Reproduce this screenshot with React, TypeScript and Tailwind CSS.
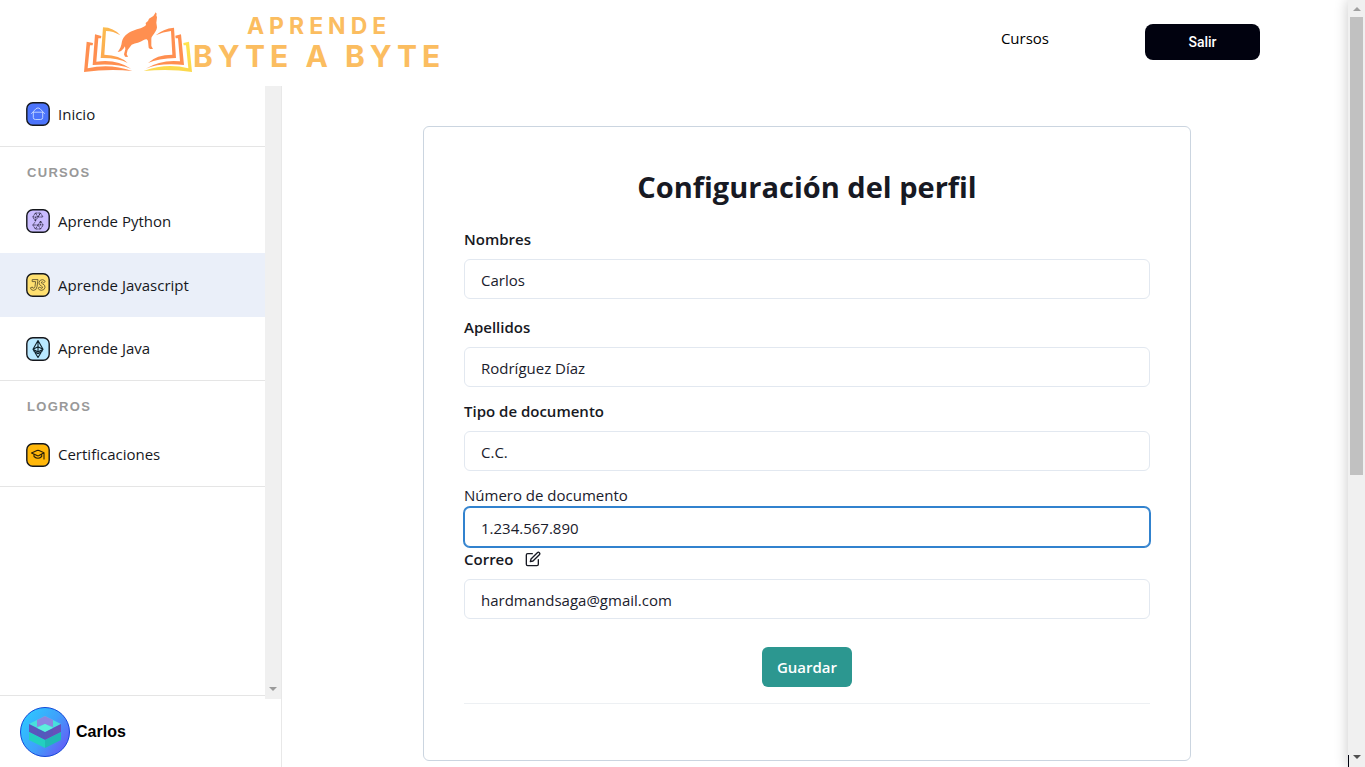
import type { ReactNode } from "react";
import { FiEdit } from "react-icons/fi";

function BookLogo() {
  return (
    <svg viewBox="40 36 330 183" className="h-[61px] w-[110px] shrink-0" aria-hidden="true">
      <defs>
        <linearGradient id="warm" x1="0" y1="0" x2="1" y2="1">
          <stop offset="0" stopColor="#fbc04f" />
          <stop offset="1" stopColor="#ff8f4d" />
        </linearGradient>
        <linearGradient id="sun" x1="0" y1="0" x2="0" y2="1">
          <stop offset="0" stopColor="#ffe54f" />
          <stop offset="1" stopColor="#fbd84d" />
        </linearGradient>
      </defs>
      <g fill="#ff8f50">
        <path d="M51 125 L70 129 L69 136 L61 136 L54 205 Q120 189 188 213 Q120 205 43 216 Z" />
        <path d="M76 103 L95 108 L94 115 L86 115 L80 185 Q140 176 184 206 Q140 189 69 195 Z" />
        <path d="M258 106 Q280 86 313 83 L319 174 Q265 176 235 189 Q260 164 308 164 L304 93 Q280 95 258 106 Z" />
        <path d="M317 107 L334 103 L343 195 Q270 188 228 206 Q275 178 331 184 L325 115 L318 115 Z" />
        <path d="M258 37 L255 42 L251 48 L238 56 L235 63 L228 69 L229 75 C222 84 206 86 190 92 C174 98 160 110 157 124 C155 139 151 148 144 156 C154 156 161 148 166 139 L167 148 L163 163 L166 170 L175 171 L171 162 L174 150 L186 134 C198 129 212 128 222 120 C229 116 233 117 235 123 L237 143 L241 147 L250 147 L245 138 L245 116 C246 106 260 98 262 82 L260 68 L262 52 L260 46 L261 41 Z" />
      </g>
      <path fill="url(#warm)" d="M100 82 Q132 83 152 106 Q130 93 109 93 L104 164 Q150 165 174 189 Q145 173 93 174 Z" />
      <path fill="url(#sun)" d="M341 129 L358 125 L367 216 Q300 205 222 213 Q290 188 356 205 L349 136 L342 136 Z" />
    </svg>
  );
}

function IconTile({ fill, children }: { fill: string; children: ReactNode }) {
  return (
    <svg viewBox="0 0 24 24" className="size-6 shrink-0" fill="none" aria-hidden="true">
      <rect x="0.8" y="0.8" width="22.4" height="22.4" rx="6" fill={fill} stroke="#15171c" strokeWidth="1.4" />
      {children}
    </svg>
  );
}

const homeIcon = (
  <IconTile fill="#4c74fb">
    <path d="M5.5 11.5 L10 6.7 Q12 5 14 6.7 L18.5 11.5 M7.3 10.5 V15.5 Q7.3 17.5 9.3 17.5 H14.7 Q16.7 17.5 16.7 15.5 V10.5 M7.5 10.2 H16.5" stroke="#c9dcff" strokeWidth="0.9" strokeLinecap="round" />
  </IconTile>
);

const pythonIcon = (
  <IconTile fill="#c9bcff">
    <path d="M9.4 4 L6.8 8 L9.4 12 L12 8 Z M9.4 4 H14.4 L12 8 L14.4 4 L17 8 H6.8 M14.6 12 L12 16 L14.6 20 L17.2 16 Z M14.6 20 H9.4 L12 16 M9.4 20 L6.8 16 H17.2 M9.4 12 L9.4 8 M14.6 12 V16 M6.8 16 L9.4 12.6" stroke="#2b2743" strokeWidth="0.8" strokeDasharray="2.2 0.6" />
  </IconTile>
);

const javascriptIcon = (
  <IconTile fill="#ffe070">
    <path d="M6.2 6.6 H12 L11 13.8 Q10.4 17.4 7.4 17.4 Q4.8 17.2 4.4 14.8 L6.4 14 Q6.8 15.6 7.8 15.2 Q8.8 15 9 13.5 L9.6 8.6 H6.2 Z M19.2 8.5 L17.6 9.8 Q16.4 8.3 15.5 9 Q14.7 10.2 16.5 10.8 Q19.4 12 19 14.4 Q18.4 17.4 15.4 17.3 Q12.9 17.2 12 15.2 L13.8 14 Q14.8 15.7 16.1 15.2 Q17.4 13.8 15.4 13 Q12.5 11.8 13 9.3 Q13.8 6.6 16.3 6.7 Q18.4 6.8 19.2 8.5 Z" stroke="#63572f" strokeWidth="0.9" />
  </IconTile>
);

const javaIcon = (
  <IconTile fill="#b9e8ff">
    <path d="M12 3.5 L17 12.2 L12 20.5 L7 12.2 Z M12 3.5 V14.8 M7 12.2 L12 9.8 L17 12.2 L12 15 Z M7.5 14 L12 16.7 L16.5 14" stroke="#10222c" strokeWidth="1.1" strokeLinejoin="round" />
  </IconTile>
);

const capIcon = (
  <IconTile fill="#ffb70a">
    <path d="M5.5 10 L11 7.6 Q12 7.2 13 7.6 L18 9.7 L13 12.6 Q12 13.1 11 12.6 Z M8 11.5 V13.5 Q12 17 15.7 13.5 V11.5 M18 9.8 V16" stroke="#2c2208" strokeWidth="1.1" strokeLinejoin="round" strokeLinecap="round" />
  </IconTile>
);

function Avatar() {
  return (
    <svg viewBox="0 0 50 50" className="size-[50px] shrink-0" aria-hidden="true">
      <defs>
        <linearGradient id="sky" x1="0" y1="0.2" x2="1" y2="0.9">
          <stop offset="0" stopColor="#2cc9ff" />
          <stop offset="0.5" stopColor="#3fa0fb" />
          <stop offset="1" stopColor="#6c4ff5" />
        </linearGradient>
      </defs>
      <circle cx="25" cy="25" r="24.5" fill="url(#sky)" stroke="#1348d8" />
      <path d="M25 9 L41 17 L25 25 L9 17 Z" fill="#48dfdc" />
      <path d="M9 17 L25 25 V33 L9 25 Z" fill="#5b55bd" />
      <path d="M41 17 L25 25 V33 L41 25 Z" fill="#6650bb" />
      <path d="M9 25 L25 33 V41 L9 33 Z" fill="#22d0c0" />
      <path d="M41 25 L25 33 V41 L41 33 Z" fill="#20b9b5" />
      <path d="M25 9 L33 13 V20 L25 17 L17 20 V13 Z" fill="#8c86e2" />
      <path d="M25 17 L33 21 L25 25 L17 21 Z" fill="#5cf0dc" />
      <path d="M17 21 L25 25 L33 21 V27 L25 31 L17 27 Z" fill="#3f63bd" opacity="0.35" />
    </svg>
  );
}

function NavItem({ icon, label, active = false }: { icon: ReactNode; label: string; active?: boolean }) {
  return (
    <a href="#" className={`flex h-16 items-center gap-2 pl-[26px] text-[15px] text-[#16181d] last:h-[63px] ${active ? "bg-[#eaeff9]" : ""}`}>
      {icon}
      {label}
    </a>
  );
}

function NavHeading({ children }: { children: ReactNode }) {
  return (
    <h2 className="flex h-[42px] items-center pt-[10px] pl-[27px] font-['Liberation_Sans',sans-serif] text-[13px] font-bold tracking-widest text-[#999999]">
      {children}
    </h2>
  );
}

function Sidebar() {
  return (
    <aside className="flex w-[282px] shrink-0 flex-col border-r border-[#e8e8e8]">
      <div className="flex flex-1">
        <nav className="flex-1">
          <div className="border-b border-[#e5e5e5]">
            <a href="#" className="flex h-[60px] items-center gap-2 pb-1 pl-[26px] text-[15px] text-[#16181d]">
              {homeIcon}
              Inicio
            </a>
          </div>
          <div className="border-b border-[#e5e5e5]">
            <NavHeading>CURSOS</NavHeading>
            <NavItem icon={pythonIcon} label="Aprende Python" />
            <NavItem icon={javascriptIcon} label="Aprende Javascript" active />
            <NavItem icon={javaIcon} label="Aprende Java" />
          </div>
          <div className="border-b border-[#e5e5e5]">
            <NavHeading>LOGROS</NavHeading>
            <NavItem icon={capIcon} label="Certificaciones" />
          </div>
        </nav>
        <div className="relative z-10 -mb-1 flex w-4 flex-col items-center justify-end bg-[#f0f0f0] pb-2">
          <svg viewBox="0 0 8 4" className="h-1 w-2" aria-hidden="true">
            <path d="M0 0 H8 L4 4 Z" fill="#9b9b9b" />
          </svg>
        </div>
      </div>
      <div className="flex h-[72px] items-center gap-[6px] border-t border-[#e5e5e5] pl-5 font-['Liberation_Sans',sans-serif] text-base font-bold text-black">
        <Avatar />
        Carlos
      </div>
    </aside>
  );
}

const labelClass = "block text-[15px] leading-6 font-semibold text-[#171923]";
const inputClass =
  "block h-10 w-full rounded-md border border-[#e2e8f0] bg-white px-4 pt-[2px] text-[15px] text-[#1a202c] outline-none";

function ProfileCard() {
  return (
    <form
      className="w-full max-w-3xl rounded-md border border-[#cbd5e0] bg-white px-10 pt-10 pb-14"
      onSubmit={(event) => event.preventDefault()}
    >
      <h1 className="mb-5 text-center text-[29px] leading-10 font-bold text-[#171923]">Configuración del perfil</h1>
      <div className="mb-4">
        <label htmlFor="nombres" className={`mb-2 ${labelClass}`}>Nombres</label>
        <input id="nombres" defaultValue="Carlos" className={inputClass} />
      </div>
      <div className="mb-3">
        <label htmlFor="apellidos" className={`mb-2 ${labelClass}`}>Apellidos</label>
        <input id="apellidos" defaultValue="Rodríguez Díaz" className={inputClass} />
      </div>
      <div className="mb-3">
        <label htmlFor="tipo" className={`mb-2 ${labelClass}`}>Tipo de documento</label>
        <input id="tipo" defaultValue="C.C." className={inputClass} />
      </div>
      <div>
        <label htmlFor="numero" className="block text-[15px] leading-6 text-[#1a202c]">Número de documento</label>
        <input
          id="numero"
          defaultValue="1.234.567.890"
          className="block h-10 w-full rounded-md border border-[#3182ce] bg-white px-4 pt-[2px] text-[15px] text-[#1a202c] ring-1 ring-[#3182ce] outline-none"
        />
      </div>
      <div className="mb-7">
        <div className="mb-2 flex items-center gap-3">
          <label htmlFor="correo" className={labelClass}>Correo</label>
          <button type="button" aria-label="Editar correo" className="text-[#171923]">
            <FiEdit className="size-4" />
          </button>
        </div>
        <input id="correo" type="email" defaultValue="hardmandsaga@gmail.com" className={inputClass} />
      </div>
      <div className="flex justify-center border-b border-[#edf0f3] pb-4">
        <button type="submit" className="h-10 rounded-md bg-[#2c9790] px-[15px] text-[15px] font-semibold text-white">
          Guardar
        </button>
      </div>
    </form>
  );
}

function PageScrollbar() {
  return (
    <div className="flex w-[17px] shrink-0 flex-col items-center bg-[#f0f0f0] shadow-[0_0_14px_rgba(0,0,0,0.22)]" aria-hidden="true">
      <div className="flex h-[17px] items-center justify-center pt-px">
        <svg viewBox="0 0 8 4" className="h-1 w-2">
          <path d="M0 4 H8 L4 0 Z" fill="#a0a0a0" />
        </svg>
      </div>
      <div className="flex w-full flex-1 justify-center">
        <div className="h-[62%] w-[13px] bg-[#c1c1c1]" />
      </div>
      <div className="flex h-3 w-full justify-center border-l border-[#01020f]">
        <svg viewBox="0 0 8 4" className="h-1 w-2">
          <path d="M0 0 H8 L4 4 Z" fill="#505050" />
        </svg>
      </div>
    </div>
  );
}

export default function App() {
  return (
    <div className="flex min-h-screen bg-white font-['Open_Sans','Noto_Sans',sans-serif]">
      <div className="flex min-w-0 flex-1 flex-col">
        <header className="flex h-[86px] items-center justify-between pr-22 pb-[2px] pl-[83px]">
          <a href="#" className="flex items-center font-['Inter','Open_Sans',sans-serif] font-bold text-[#fbbd60]" aria-label="Aprende Byte a Byte">
            <BookLogo />
            <span className="flex flex-col items-center pb-px">
              <span className="text-[23px] leading-7 tracking-[5px]">APRENDE</span>
              <span className="text-[30px] leading-8 tracking-[5px]">BYTE A BYTE</span>
            </span>
          </a>
          <div className="flex items-center gap-24">
            <a href="#" className="pb-2 text-[15px] text-black">Cursos</a>
            <button type="button" className="h-9 w-[115px] rounded-lg bg-[#01020f] font-['Roboto',sans-serif] text-sm font-medium text-white">
              Salir
            </button>
          </div>
        </header>
        <div className="flex flex-1">
          <Sidebar />
          <main className="flex flex-1 items-start justify-center pt-10 pr-4">
            <ProfileCard />
          </main>
        </div>
      </div>
      <PageScrollbar />
    </div>
  );
}
